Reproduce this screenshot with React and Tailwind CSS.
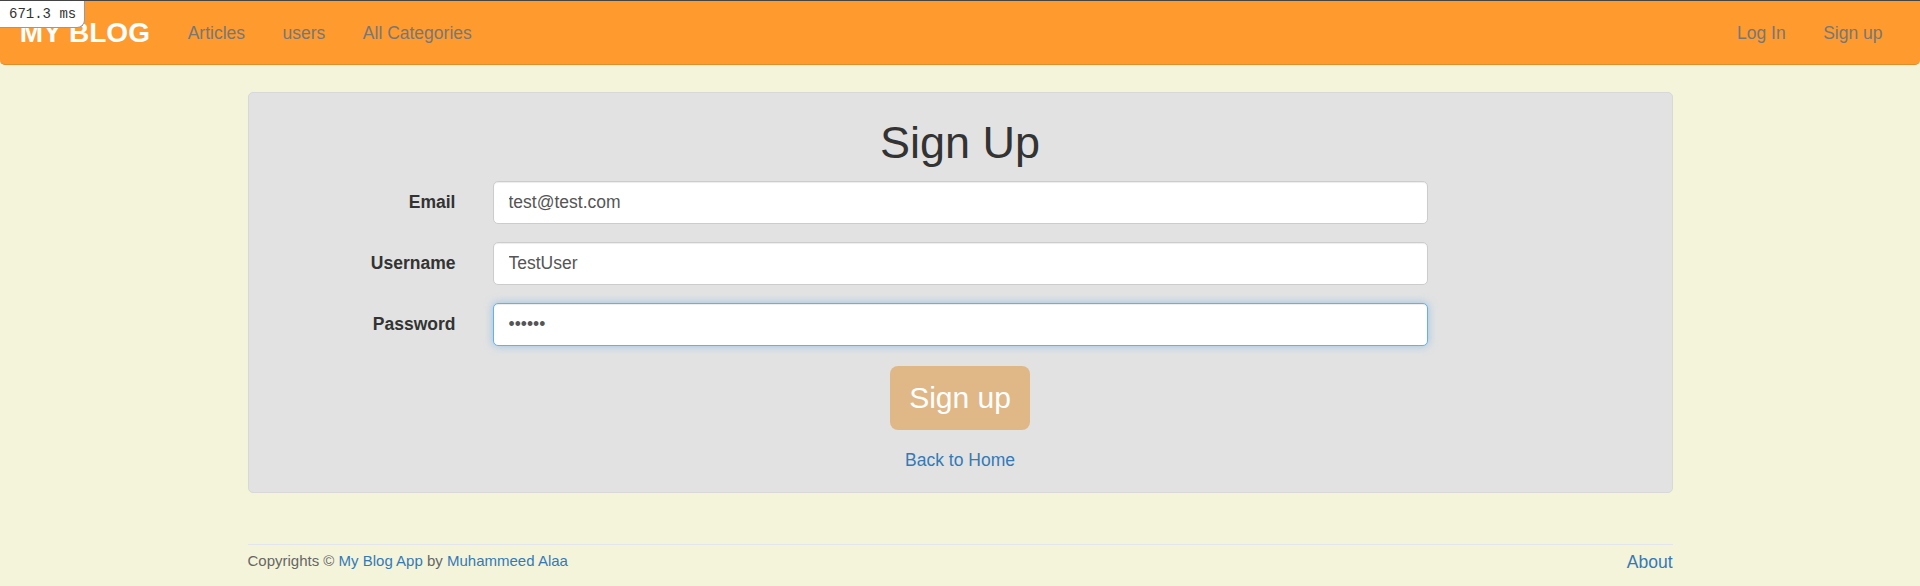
import React, { useState } from "react";

const NavLink = ({ children }) => (
  <a href="#" className="px-[18.75px] text-[17.5px] text-[#777] leading-[62px]">
    {children}
  </a>
);

const FormRow = ({ label, children }) => (
  <div className="flex items-center">
    <label className="w-[224px] pr-[37px] text-right text-[17.5px] font-bold text-[#333]">
      {label}
    </label>
    <div className="w-[935px]">{children}</div>
  </div>
);

const inputBase =
  "w-full h-[42.5px] rounded-[5px] bg-white px-[15px] text-[17.5px] text-[#555] outline-none";

export default function App() {
  const [email, setEmail] = useState("test@test.com");
  const [username, setUsername] = useState("TestUser");
  const [password, setPassword] = useState("123456");

  return (
    <div
      className="relative min-h-[586px] bg-[#f4f4da] border-t border-[#444]"
      style={{ fontFamily: '"Liberation Sans", Arial, sans-serif' }}
    >
      {/* timing badge */}
      <div className="absolute left-0 top-0 z-10 h-[27px] w-[85px] rounded-br-[8px] border-r border-b border-[#999] bg-white pl-[9px] text-[14px] leading-[26px] text-[#333] font-['Liberation_Mono',monospace]">
        671.3 ms
      </div>

      {/* navbar */}
      <nav className="flex h-[64px] items-center justify-between rounded-b-[5px] border-b border-[#e88a25] bg-[#ff9b2e] px-[18.75px]">
        <div className="flex items-center">
          <a href="#" className="ml-[1px] mr-[19px] text-[28px] font-bold text-white leading-[62px]">
            MY BLOG
          </a>
          <NavLink>Articles</NavLink>
          <NavLink>users</NavLink>
          <NavLink>All Categories</NavLink>
        </div>
        <div className="flex items-center">
          <NavLink>Log In</NavLink>
          <NavLink>Sign up</NavLink>
        </div>
      </nav>

      <div className="mx-auto w-[1425px]">
        {/* sign up card */}
        <div className="mt-[27px] h-[401px] rounded-[5px] border border-[#d8d8d8] bg-[#e2e2e2] pt-[25px]">
          <h1 className="text-center text-[45px] leading-[50px] text-[#333]">Sign Up</h1>
          <form className="mt-[13px] flex flex-col gap-[18.5px] pl-[20px]" onSubmit={(e) => e.preventDefault()}>
            <FormRow label="Email">
              <input
                className={`${inputBase} border border-[#ccc] shadow-[inset_0_1px_1px_rgba(0,0,0,0.075)]`}
                value={email}
                onChange={(e) => setEmail(e.target.value)}
              />
            </FormRow>
            <FormRow label="Username">
              <input
                className={`${inputBase} border border-[#ccc] shadow-[inset_0_1px_1px_rgba(0,0,0,0.075)]`}
                value={username}
                onChange={(e) => setUsername(e.target.value)}
              />
            </FormRow>
            <FormRow label="Password">
              <input
                type="password"
                className={`${inputBase} border border-[#66afe9] shadow-[inset_0_1px_1px_rgba(0,0,0,0.075),0_0_8px_rgba(102,175,233,0.6)]`}
                value={password}
                onChange={(e) => setPassword(e.target.value)}
              />
            </FormRow>
          </form>
          <div className="mt-[20px] flex flex-col items-center">
            <button className="h-[64px] w-[140px] rounded-[8px] bg-[#e0b887] text-[30px] text-white">
              Sign up
            </button>
            <a href="#" className="mt-[17px] text-[17.5px] text-[#337ab7]">
              Back to Home
            </a>
          </div>
        </div>

        {/* footer */}
        <footer className="mt-[51px] flex items-start justify-between border-t border-[#e3e5ee] pt-[5px]">
          <p className="text-[15px] text-[#666]">
            Copyrights © <a href="#" className="text-[#337ab7]">My Blog App</a> by{" "}
            <a href="#" className="text-[#337ab7]">Muhammeed Alaa</a>
          </p>
          <a href="#" className="-mt-[1px] text-[17.5px] text-[#337ab7]">
            About
          </a>
        </footer>
      </div>
    </div>
  );
}
